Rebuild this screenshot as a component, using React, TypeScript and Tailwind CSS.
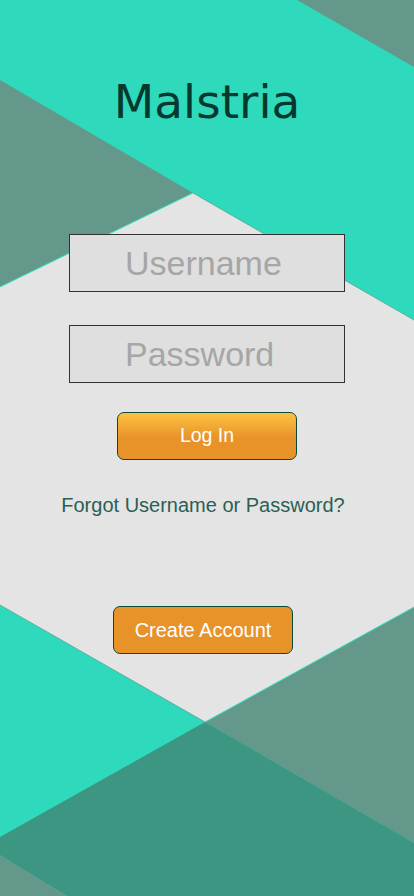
function Backdrop() {
  return (
    <svg
      className="absolute inset-0 h-full w-full"
      viewBox="0 0 414 896"
      preserveAspectRatio="none"
      aria-hidden="true"
    >
      <rect x="0" y="0" width="414" height="896" fill="#2fd9bb" />
      {/* light centre panel */}
      <polygon points="193,193 414,320 414,607 205,722 0,605 0,287" fill="#e4e4e4" />
      {/* grey triangles */}
      <polygon points="297,0 414,0 414,67" fill="#64988a" />
      <polygon points="0,80 193,193 0,287" fill="#64988a" />
      <polygon points="205,722 414,607 414,843" fill="#64988a" />
      <polygon points="0,855 67,896 0,896" fill="#64988a" />
      {/* overlap */}
      <polygon points="0,837 205,722 414,843 414,896 67,896 0,855" fill="#3c9682" />
      {/* edge hairlines */}
      <line x1="0" y1="287" x2="193" y2="193" stroke="#3fe6c8" strokeWidth="1" />
      <line x1="193" y1="193" x2="414" y2="320" stroke="#4f9e8c" strokeWidth="0.7" />
      <line x1="0" y1="605" x2="205" y2="722" stroke="#4f9e8c" strokeWidth="0.7" />
      <line x1="205" y1="722" x2="414" y2="607" stroke="#3fe6c8" strokeWidth="1" />
    </svg>
  );
}

export default function App() {
  return (
    <div className="relative h-[896px] w-full overflow-hidden bg-[#e4e4e4] font-['Liberation_Sans',Arial,sans-serif]">
      <Backdrop />

      <div className="relative flex flex-col items-center">
        {/* Title */}
        <h1 className="mt-[78px] text-[47px] leading-none text-[#05392f] font-['DejaVu_Sans',sans-serif]">
          Malstria
        </h1>

        {/* Fields */}
        <input
          type="text"
          placeholder="Username"
          className="mt-[109px] h-[58px] w-[276px] border border-[#333333] bg-[#dfdfdf] pl-[55px] text-[34px] text-[#555] outline-none placeholder:text-[#a6a6a6]"
        />
        <input
          type="password"
          placeholder="Password"
          className="mt-[33px] h-[58px] w-[276px] border border-[#333333] bg-[#dfdfdf] pl-[55px] text-[34px] text-[#555] outline-none placeholder:text-[#a6a6a6]"
        />

        <button className="mt-[29px] flex h-[48px] w-[180px] items-center justify-center rounded-[7px] border border-[#0b4a3b] bg-[linear-gradient(to_bottom,#fdc241,#e8922a_55%)] text-[19.5px] text-white">
          Log In
        </button>

        <a href="#" className="mt-[33px] mr-2 text-[20px] leading-6 text-[#2b5f55]">
          Forgot Username or Password?
        </a>

        <button className="mt-[89px] mr-2 flex h-[48px] w-[180px] items-center justify-center rounded-[7px] border border-[#0b4a3b] bg-[#e8922a] text-[20px] text-white">
          Create Account
        </button>
      </div>
    </div>
  );
}
